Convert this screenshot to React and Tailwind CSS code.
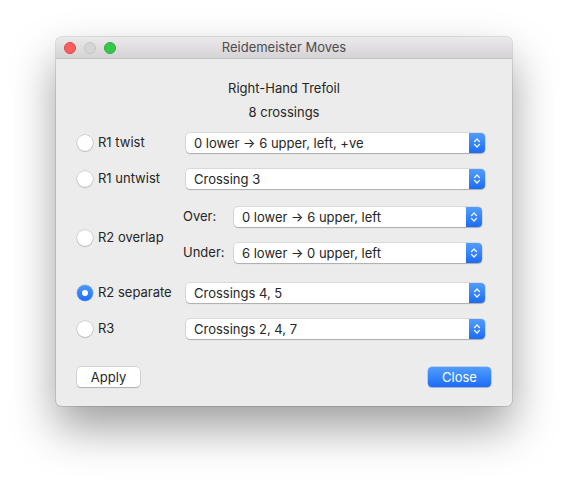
import React from 'react';

const font = { fontFamily: 'Inter, "Liberation Sans", sans-serif' };

function Chevrons() {
  return (
    <svg width="8" height="12" viewBox="0 0 8 12" fill="none">
      <path d="M1.5 4.6 L4 2 L6.5 4.6" stroke="white" strokeWidth="1.3" strokeLinecap="round" strokeLinejoin="round" />
      <path d="M1.5 7.4 L4 10 L6.5 7.4" stroke="white" strokeWidth="1.3" strokeLinecap="round" strokeLinejoin="round" />
    </svg>
  );
}

function Popup({ value, className = 'w-[299px]' }) {
  return (
    <div className={`flex h-[20px] items-stretch rounded-[4px] bg-white shadow-[0_0_0_0.5px_rgba(0,0,0,0.16),0_1px_1px_rgba(0,0,0,0.2)] ${className}`}>
      <span className="flex-1 truncate pl-[8px] text-[13px] leading-[20px] text-[#262626]">{value}</span>
      <span className="flex w-[16px] items-center justify-center rounded-r-[4px] bg-gradient-to-b from-[#519dfc] to-[#1a6cf5]">
        <Chevrons />
      </span>
    </div>
  );
}

function Radio({ label, checked }) {
  return (
    <div className="flex items-center gap-[5px]">
      {checked ? (
        <span className="flex h-[16px] w-[16px] items-center justify-center rounded-full bg-gradient-to-b from-[#4c9afb] to-[#1c6ef5] shadow-[0_0_0_0.5px_rgba(0,60,200,0.3)]">
          <span className="h-[6px] w-[6px] rounded-full bg-white" />
        </span>
      ) : (
        <span className="h-[16px] w-[16px] rounded-full bg-white shadow-[0_0_0_0.5px_rgba(0,0,0,0.22),0_1px_1px_rgba(0,0,0,0.15)]" />
      )}
      <span className="text-[13px] text-[#262626]">{label}</span>
    </div>
  );
}

export default function App() {
  return (
    <div className="min-h-[480px] bg-white pl-[56px] pt-[37px]" style={font}>
      <div className="w-[456px] overflow-hidden rounded-[5px] bg-[#ececec] shadow-[0_0_0_0.5px_rgba(0,0,0,0.22),0_22px_45px_rgba(0,0,0,0.38)]">
        {/* title bar */}
        <div className="relative flex h-[22px] items-center border-b border-[#c4c4c4] bg-gradient-to-b from-[#ebe9eb] to-[#d5d3d5]">
          <div className="flex gap-[8px] pl-[8px]">
            <span className="h-[12px] w-[12px] rounded-full border-[0.5px] border-[#e0443e] bg-[#fc605c]" />
            <span className="h-[12px] w-[12px] rounded-full border-[0.5px] border-[#c4c4c4] bg-[#d6d6d6]" />
            <span className="h-[12px] w-[12px] rounded-full border-[0.5px] border-[#2dac3e] bg-[#35c84a]" />
          </div>
          <div className="absolute inset-0 flex items-center justify-center text-[13px] text-[#4d4d4d]">
            Reidemeister Moves
          </div>
        </div>

        {/* body */}
        <div className="pl-[21px] pr-[21px] pt-[21px] pb-[19px] text-[#262626]">
          <div className="text-center text-[13px] leading-[16px]">Right-Hand Trefoil</div>
          <div className="mt-[8px] text-center text-[13px] leading-[16px]">8 crossings</div>

          <div className="mt-[13px] flex items-center">
            <div className="w-[109px]"><Radio label="R1 twist" /></div>
            <Popup value="0 lower → 6 upper, left, +ve" />
          </div>

          <div className="mt-[16px] flex items-center">
            <div className="w-[109px]"><Radio label="R1 untwist" /></div>
            <Popup value="Crossing 3" />
          </div>

          <div className="mt-[18px] flex items-center">
            <div className="mt-[5px] w-[106px]"><Radio label="R2 overlap" /></div>
            <div className="flex flex-col gap-[16px]">
              <div className="flex items-center">
                <span className="w-[51px] text-[13px]">Over:</span>
                <Popup value="0 lower → 6 upper, left" className="w-[248px]" />
              </div>
              <div className="flex items-center">
                <span className="w-[51px] text-[13px]">Under:</span>
                <Popup value="6 lower → 0 upper, left" className="w-[248px]" />
              </div>
            </div>
          </div>

          <div className="mt-[20px] flex items-center">
            <div className="w-[109px]"><Radio label="R2 separate" checked /></div>
            <Popup value="Crossings 4, 5" />
          </div>

          <div className="mt-[16px] flex items-center">
            <div className="w-[109px]"><Radio label="R3" /></div>
            <Popup value="Crossings 2, 4, 7" />
          </div>

          <div className="mt-[28px] flex items-center justify-between">
            <button className="h-[20px] w-[63px] rounded-[4px] bg-white text-[13px] leading-[20px] text-[#262626] shadow-[0_0_0_0.5px_rgba(0,0,0,0.2),0_1px_1px_rgba(0,0,0,0.18)]">
              Apply
            </button>
            <button className="h-[20px] w-[63px] rounded-[4px] bg-gradient-to-b from-[#519dfc] to-[#1a6cf5] text-[13px] leading-[20px] text-white shadow-[0_0_0_0.5px_rgba(0,60,200,0.35),0_1px_1px_rgba(0,0,0,0.15)]">
              Close
            </button>
          </div>
        </div>
      </div>
    </div>
  );
}
